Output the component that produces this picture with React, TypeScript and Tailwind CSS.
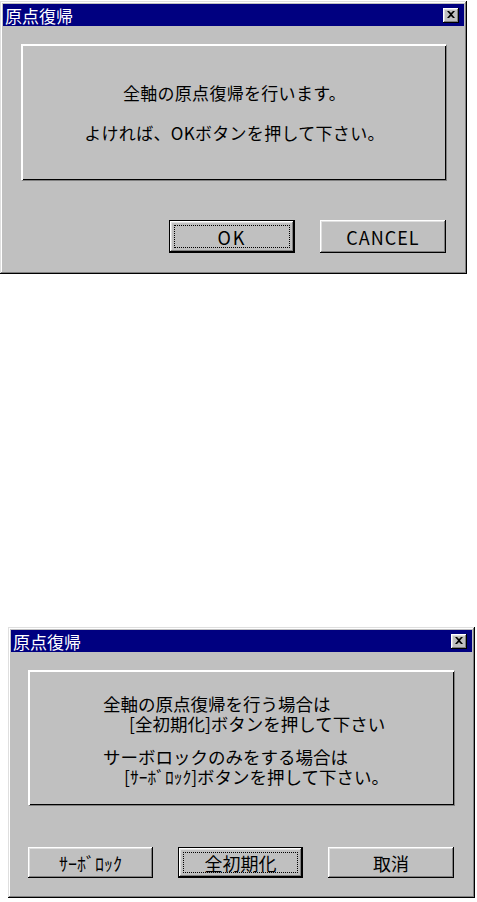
import React from 'react';

const font = "font-['Noto_Sans_CJK_JP','Noto_Sans_CJK_SC',sans-serif]";

const CloseButton = () => (
  <div className="mr-[5px] flex h-[15px] w-[16px] items-center justify-center bg-[#c0c0c0] shadow-[inset_-1px_-1px_0_#000,inset_1px_1px_0_#fff,inset_-2px_-2px_0_#808080,inset_2px_2px_0_#dfdfdf]">
    <svg width="8" height="7" viewBox="0 0 8 7" className="mb-[1px]">
      <path d="M0 0h2l2 2 2-2h2L5 3.5 8 7H6L4 5 2 7H0l3-3.5z" fill="#000" />
    </svg>
  </div>
);

interface WinButtonProps {
  label: string;
  width: string;
  height: string;
  isDefault?: boolean;
  extra?: string;
}

const WinButton: React.FC<WinButtonProps> = ({ label, width, height, isDefault, extra }) => {
  if (isDefault) {
    return (
      <div className={`relative flex items-center justify-center border border-black bg-[#c0c0c0] shadow-[inset_-1px_-1px_0_#000,inset_1px_1px_0_#fff,inset_-2px_-2px_0_#808080,inset_2px_2px_0_#dfdfdf] ${width} ${height}`}>
        <div className="absolute inset-[4px] border border-dotted border-black" />
        <span className={`text-[18px] leading-none text-black ${extra ?? ''}`}>{label}</span>
      </div>
    );
  }
  return (
    <div className={`flex items-center justify-center bg-[#c0c0c0] shadow-[inset_-1px_-1px_0_#000,inset_1px_1px_0_#fff,inset_-2px_-2px_0_#808080,inset_2px_2px_0_#dfdfdf] ${width} ${height}`}>
      <span className={`text-[18px] leading-none text-black ${extra ?? ''}`}>{label}</span>
    </div>
  );
};

interface WindowProps {
  height: string;
  children: React.ReactNode;
  className?: string;
  padX: string;
}

const Win: React.FC<WindowProps> = ({ height, children, className, padX }) => (
  <div className={`flex w-[467px] flex-col bg-[#c0c0c0] p-[3px] shadow-[inset_-1px_-1px_0_#000,inset_1px_1px_0_#dfdfdf,inset_-2px_-2px_0_#808080,inset_2px_2px_0_#fff] ${height} ${className ?? ''}`}>
    <div className="flex h-[22px] items-center justify-between bg-[#000080]">
      <span className="pl-[2px] text-[17px] leading-none text-white">原点復帰</span>
      <CloseButton />
    </div>
    <div className={`flex flex-col pt-[18px] ${padX}`}>{children}</div>
  </div>
);

const GroupBox: React.FC<{ height: string; children: React.ReactNode }> = ({ height, children }) => (
  <div className={`border-l-2 border-t-2 border-white shadow-[inset_-1px_-1px_0_#000,1px_1px_0_#808080] ${height}`}>
    {children}
  </div>
);

export default function App() {
  return (
    <div className={`flex flex-col bg-white ${font}`}>
      <Win height="h-[273px]" className="mt-[1px]" padX="px-[18px]">
        <GroupBox height="h-[136px]">
          <div className="flex flex-col items-center pt-[37px] text-[17px] leading-[20px] tracking-[0.3px] text-black">
            <p>全軸の原点復帰を行います。</p>
            <p className="mt-[20px]">よければ、OKボタンを押して下さい。</p>
          </div>
        </GroupBox>
        <div className="mt-[40px] flex justify-end gap-[25px]">
          <WinButton label="OK" width="w-[126px]" height="h-[33px]" isDefault extra="tracking-[2px]" />
          <WinButton label="CANCEL" width="w-[126px]" height="h-[33px]" extra="tracking-[1px]" />
        </div>
      </Win>

      <Win height="h-[271px]" className="ml-[8px] mt-[353px]" padX="pl-[17px] pr-[18px]">
        <GroupBox height="h-[135px]">
          <div className="flex flex-col pl-[73px] pt-[22px] text-[17.5px] leading-[20px] text-black">
            <p>全軸の原点復帰を行う場合は</p>
            <p className="pl-[26px]">[全初期化]ボタンを押して下さい</p>
            <p className="mt-[13px]">サーボロックのみをする場合は</p>
            <p className="pl-[21px]">[ｻｰﾎﾞﾛｯｸ]ボタンを押して下さい。</p>
          </div>
        </GroupBox>
        <div className="mt-[42px] flex gap-[25px]">
          <WinButton label="ｻｰﾎﾞﾛｯｸ" width="w-[125px]" height="h-[31px]" />
          <WinButton label="全初期化" width="w-[125px]" height="h-[31px]" isDefault />
          <WinButton label="取消" width="w-[126px]" height="h-[31px]" />
        </div>
      </Win>
    </div>
  );
}
